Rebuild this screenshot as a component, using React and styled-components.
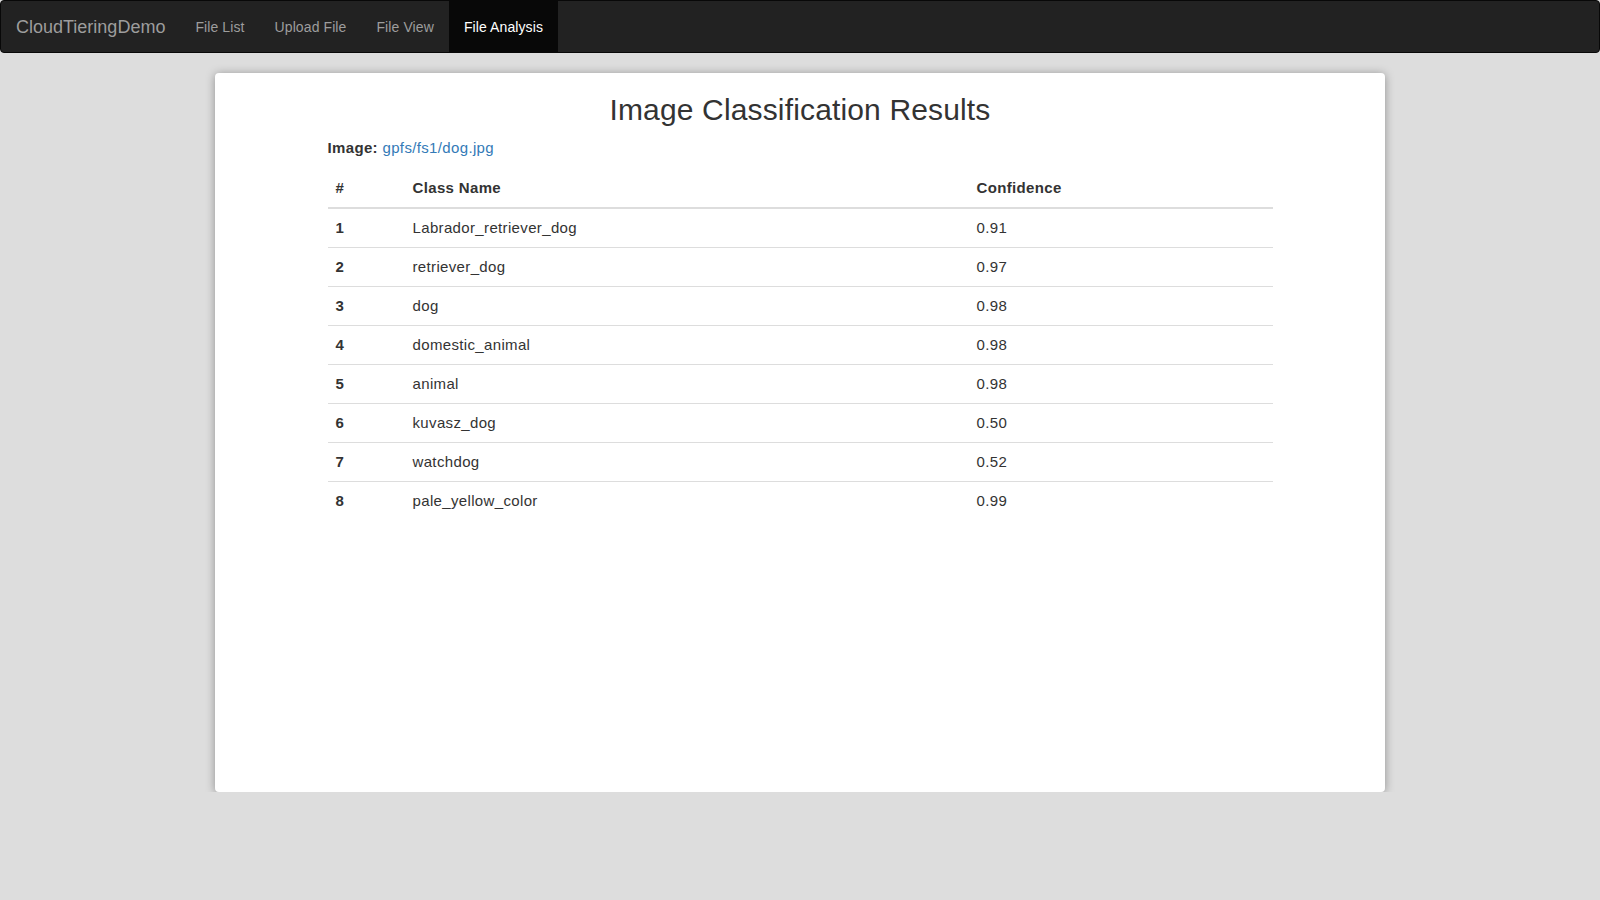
import React from 'react';
import styled, { createGlobalStyle } from 'styled-components';

const GlobalStyle = createGlobalStyle`
    html, body {
        margin: 0;
        padding: 0;
        background: #dddddd;
        font-family: "Liberation Sans", Helvetica, Arial, sans-serif;
        color: #333;
    }
    * {
        box-sizing: border-box;
    }
`

const Nav = styled.nav`
    display: flex;
    align-items: stretch;
    min-height: 53px;
    background: #222;
    border: 1px solid #080808;
    border-radius: 4px;
    margin-bottom: 20px;
`

const Brand = styled.a`
    display: block;
    padding: 16px 15px 15px;
    font-size: 18px;
    line-height: 20px;
    color: #9d9d9d;
    text-decoration: none;
`

const NavList = styled.ul`
    display: flex;
    margin: 0;
    padding: 0;
    list-style: none;
`

const NavLink = styled.a`
    display: block;
    height: 100%;
    padding: 16px 15px 15px;
    font-size: 14px;
    line-height: 20px;
    letter-spacing: 0.1px;
    text-decoration: none;
    color: ${({ active }) => (active ? '#fff' : '#9d9d9d')};
    background: ${({ active }) => (active ? '#080808' : 'transparent')};
`

const Card = styled.main`
    display: flow-root;
    width: 1170px;
    height: 719px;
    margin: 0 auto;
    background: #fff;
    border-radius: 4px;
    box-shadow: 0 1px 10px rgba(0, 0, 0, 0.35);
`

const Title = styled.h2`
    margin: 20px 0 11px;
    font-size: 30px;
    font-weight: 500;
    line-height: 1.1;
    letter-spacing: 0.15px;
    text-align: center;
    color: #333;
`

const Content = styled.section`
    width: 945px;
    margin: 0 auto;
`

const ImageLine = styled.p`
    margin: 0 0 10px;
    font-size: 15px;
    line-height: 22px;
    letter-spacing: 0.35px;

    strong {
        font-weight: 700;
    }
`

const FileLink = styled.a`
    color: #337ab7;
    text-decoration: none;
`

const Table = styled.table`
    width: 100%;
    border-collapse: collapse;
    font-size: 15px;
    line-height: 22px;
    letter-spacing: 0.35px;
`

const HeadCell = styled.th`
    padding: 8px;
    text-align: left;
    font-weight: 700;
    border-bottom: 2px solid #ddd;
    width: ${({ w }) => w || 'auto'};
`

const Cell = styled.td`
    padding: 8px;
    text-align: left;
    border-top: 1px solid #ddd;
    font-weight: ${({ bold }) => (bold ? 700 : 400)};
`

const navItems = ['File List', 'Upload File', 'File View', 'File Analysis'];

const results = [
    ['Labrador_retriever_dog', '0.91'],
    ['retriever_dog', '0.97'],
    ['dog', '0.98'],
    ['domestic_animal', '0.98'],
    ['animal', '0.98'],
    ['kuvasz_dog', '0.50'],
    ['watchdog', '0.52'],
    ['pale_yellow_color', '0.99'],
];

function App() {
    return (
        <>
            <GlobalStyle />
            <Nav>
                <Brand href="#">CloudTieringDemo</Brand>
                <NavList>
                    {navItems.map((item) => (
                        <li key={item}>
                            <NavLink href="#" active={item === 'File Analysis' ? 1 : 0}>
                                {item}
                            </NavLink>
                        </li>
                    ))}
                </NavList>
            </Nav>
            <Card>
                <Title>Image Classification Results</Title>
                <Content>
                    <ImageLine>
                        <strong>Image:</strong> <FileLink href="#">gpfs/fs1/dog.jpg</FileLink>
                    </ImageLine>
                    <Table>
                        <thead>
                            <tr>
                                <HeadCell w="77px">#</HeadCell>
                                <HeadCell w="564px">Class Name</HeadCell>
                                <HeadCell>Confidence</HeadCell>
                            </tr>
                        </thead>
                        <tbody>
                            {results.map(([name, conf], index) => (
                                <tr key={name}>
                                    <Cell bold={1}>{index + 1}</Cell>
                                    <Cell>{name}</Cell>
                                    <Cell>{conf}</Cell>
                                </tr>
                            ))}
                        </tbody>
                    </Table>
                </Content>
            </Card>
        </>
    );
}

export default App;
